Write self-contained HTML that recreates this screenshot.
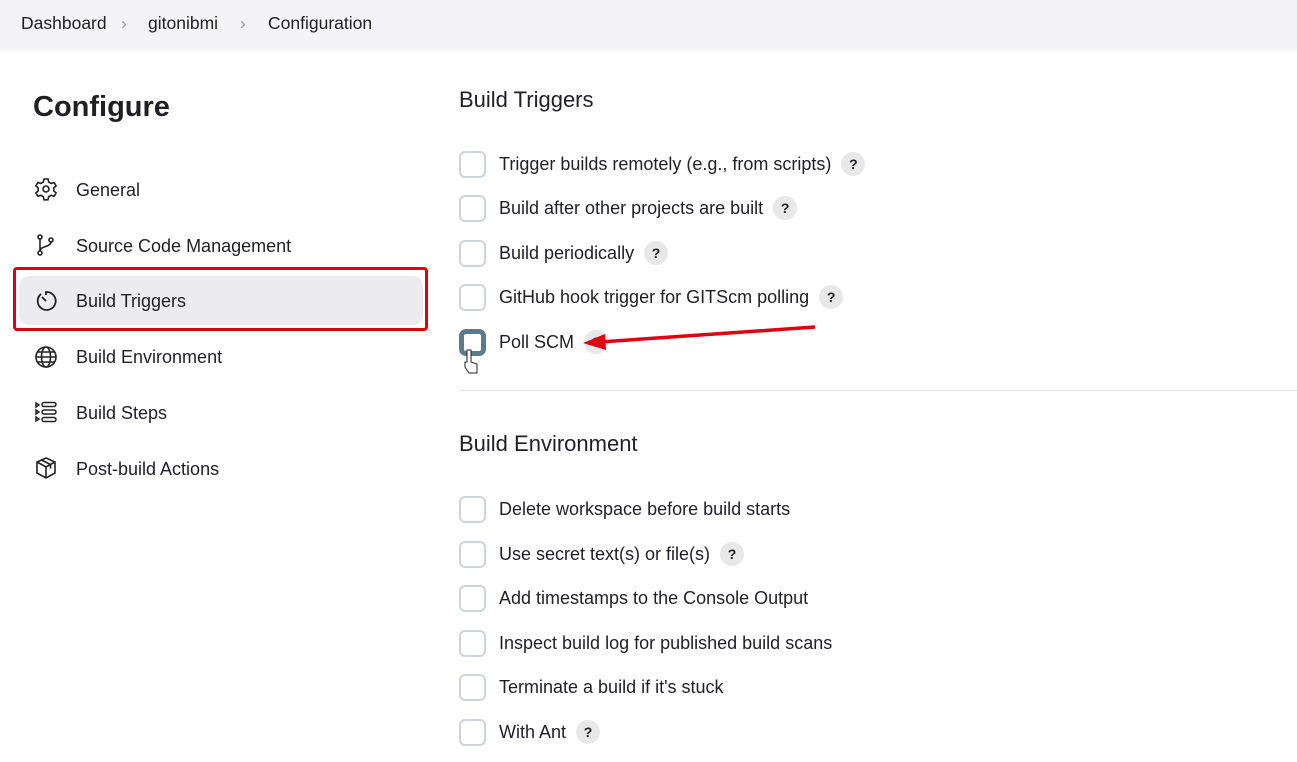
<!DOCTYPE html>
<html><head><style>
body{margin:0;width:1297px;height:762px;background:#fff;font-family:"Liberation Sans",sans-serif;color:#1f1f24;position:relative;overflow:hidden}
.bc{position:absolute;left:0;top:0;width:1297px;height:50px;background:#f4f4f6;font-size:17.5px}
.bc span{position:absolute;top:13px}
.t{position:absolute;white-space:nowrap}
.nav{position:absolute;left:76px;font-size:18px;line-height:22px}
.ic{position:absolute;left:34px;width:24px;height:24px}
.cb{position:absolute;left:459px;width:23px;height:23px;border:2px solid #ccd5dc;border-radius:6px;background:#fff}
.lb{position:absolute;left:499px;font-size:18px;line-height:24px;height:24px;white-space:nowrap}
.q{display:inline-block;width:24px;height:24px;border-radius:12px;background:#e8e8e8;text-align:center;line-height:24px;font-size:14px;font-weight:bold;margin-left:10px;vertical-align:top}
h2{position:absolute;left:459px;margin:0;font-weight:normal;font-size:22px}
</style></head><body>
<div class="bc"><span style="left:21px">Dashboard</span><span style="left:121px;color:#999">&#x203A;</span><span style="left:148px">gitonibmi</span><span style="left:240px;color:#999">&#x203A;</span><span style="left:268px">Configuration</span></div>
<div class="t" style="left:33px;top:91px;font-size:29px;font-weight:bold">Configure</div>
<div style="position:absolute;left:13px;top:267px;width:409px;height:58px;border:3px solid #e00010;border-radius:4px"></div>
<div style="position:absolute;left:19px;top:276px;width:404px;height:49px;background:#ebebf0;border-radius:10px"></div>
<svg class="ic" style="top:177px" viewBox="0 0 24 24" fill="none" stroke="#222" stroke-width="1.6"><circle cx="12" cy="12" r="3"/><path d="M10 2h4l.6 3 2.6 1.5 2.9-1 2 3.4-2.3 2v3l2.3 2-2 3.4-2.9-1-2.6 1.5-.6 3h-4l-.6-3-2.6-1.5-2.9 1-2-3.4 2.3-2v-3l-2.3-2 2-3.4 2.9 1L9.4 5z"/></svg>
<div class="nav" style="top:179px">General</div>
<svg class="ic" style="top:233px" viewBox="0 0 24 24" fill="none" stroke="#222" stroke-width="1.6"><circle cx="6" cy="4" r="2"/><circle cx="6" cy="20" r="2"/><circle cx="17" cy="7" r="2"/><path d="M6 6v12M17 9c0 5-11 4-11 9"/></svg>
<div class="nav" style="top:235px">Source Code Management</div>
<svg class="ic" style="top:289px" viewBox="0 0 24 24" fill="none" stroke="#222" stroke-width="1.8"><path d="M7 5a9 9 0 1 0 5-2v3"/><path d="M8 8l4 4"/></svg>
<div class="nav" style="top:290px">Build Triggers</div>
<svg class="ic" style="top:345px" viewBox="0 0 24 24" fill="none" stroke="#222" stroke-width="1.6"><circle cx="12" cy="12" r="10"/><ellipse cx="12" cy="12" rx="4.5" ry="10"/><path d="M2 12h20M4 7h16M4 17h16"/></svg>
<div class="nav" style="top:346px">Build Environment</div>
<svg class="ic" style="top:400px" viewBox="0 0 24 24" fill="none" stroke="#222" stroke-width="1.5"><path d="M2 3l3 2-3 2zM2 10l3 2-3 2zM2 17l3 2-3 2z"/><rect x="8" y="2.5" width="14" height="4" rx="2"/><rect x="8" y="10" width="14" height="4" rx="2"/><rect x="8" y="17.5" width="14" height="4" rx="2"/></svg>
<div class="nav" style="top:402px">Build Steps</div>
<svg class="ic" style="top:456px" viewBox="0 0 24 24" fill="none" stroke="#222" stroke-width="1.6"><path d="M12 2l9 4v11l-9 5-9-5V6z"/><path d="M3 6l9 5 9-5M12 11v11M7.5 4l9 4.5v4"/></svg>
<div class="nav" style="top:458px">Post-build Actions</div>

<h2 style="top:87px">Build Triggers</h2>
<div class="cb" style="top:151px"></div><div class="lb" style="top:152px">Trigger builds remotely (e.g., from scripts)<span class="q">?</span></div>
<div class="cb" style="top:195px"></div><div class="lb" style="top:196px">Build after other projects are built<span class="q">?</span></div>
<div class="cb" style="top:240px"></div><div class="lb" style="top:241px">Build periodically<span class="q">?</span></div>
<div class="cb" style="top:284px"></div><div class="lb" style="top:285px">GitHub hook trigger for GITScm polling<span class="q">?</span></div>
<div class="cb" style="top:329px;border:5px solid #5c7a8c;width:17px;height:17px;border-radius:7px"></div><div class="lb" style="top:330px">Poll SCM<span class="q">?</span></div>
<svg style="position:absolute;left:0;top:0" width="1297" height="762"><path d="M815 327L600 342" stroke="#e00010" stroke-width="3.5"/><path d="M583 343l22-9 1 16z" fill="#e00010"/><path d="M467 350v12h-2v5l4 6h8v-9l-6-2v-12z" fill="#fff" stroke="#222" stroke-width="1"/></svg>
<div style="position:absolute;left:459px;top:390px;width:838px;height:1px;background:#e3e3e6"></div>

<h2 style="top:431px">Build Environment</h2>
<div class="cb" style="top:496px"></div><div class="lb" style="top:497px">Delete workspace before build starts</div>
<div class="cb" style="top:541px"></div><div class="lb" style="top:542px">Use secret text(s) or file(s)<span class="q">?</span></div>
<div class="cb" style="top:585px"></div><div class="lb" style="top:586px">Add timestamps to the Console Output</div>
<div class="cb" style="top:630px"></div><div class="lb" style="top:631px">Inspect build log for published build scans</div>
<div class="cb" style="top:674px"></div><div class="lb" style="top:675px">Terminate a build if it's stuck</div>
<div class="cb" style="top:719px"></div><div class="lb" style="top:720px">With Ant<span class="q">?</span></div>
</body></html>
